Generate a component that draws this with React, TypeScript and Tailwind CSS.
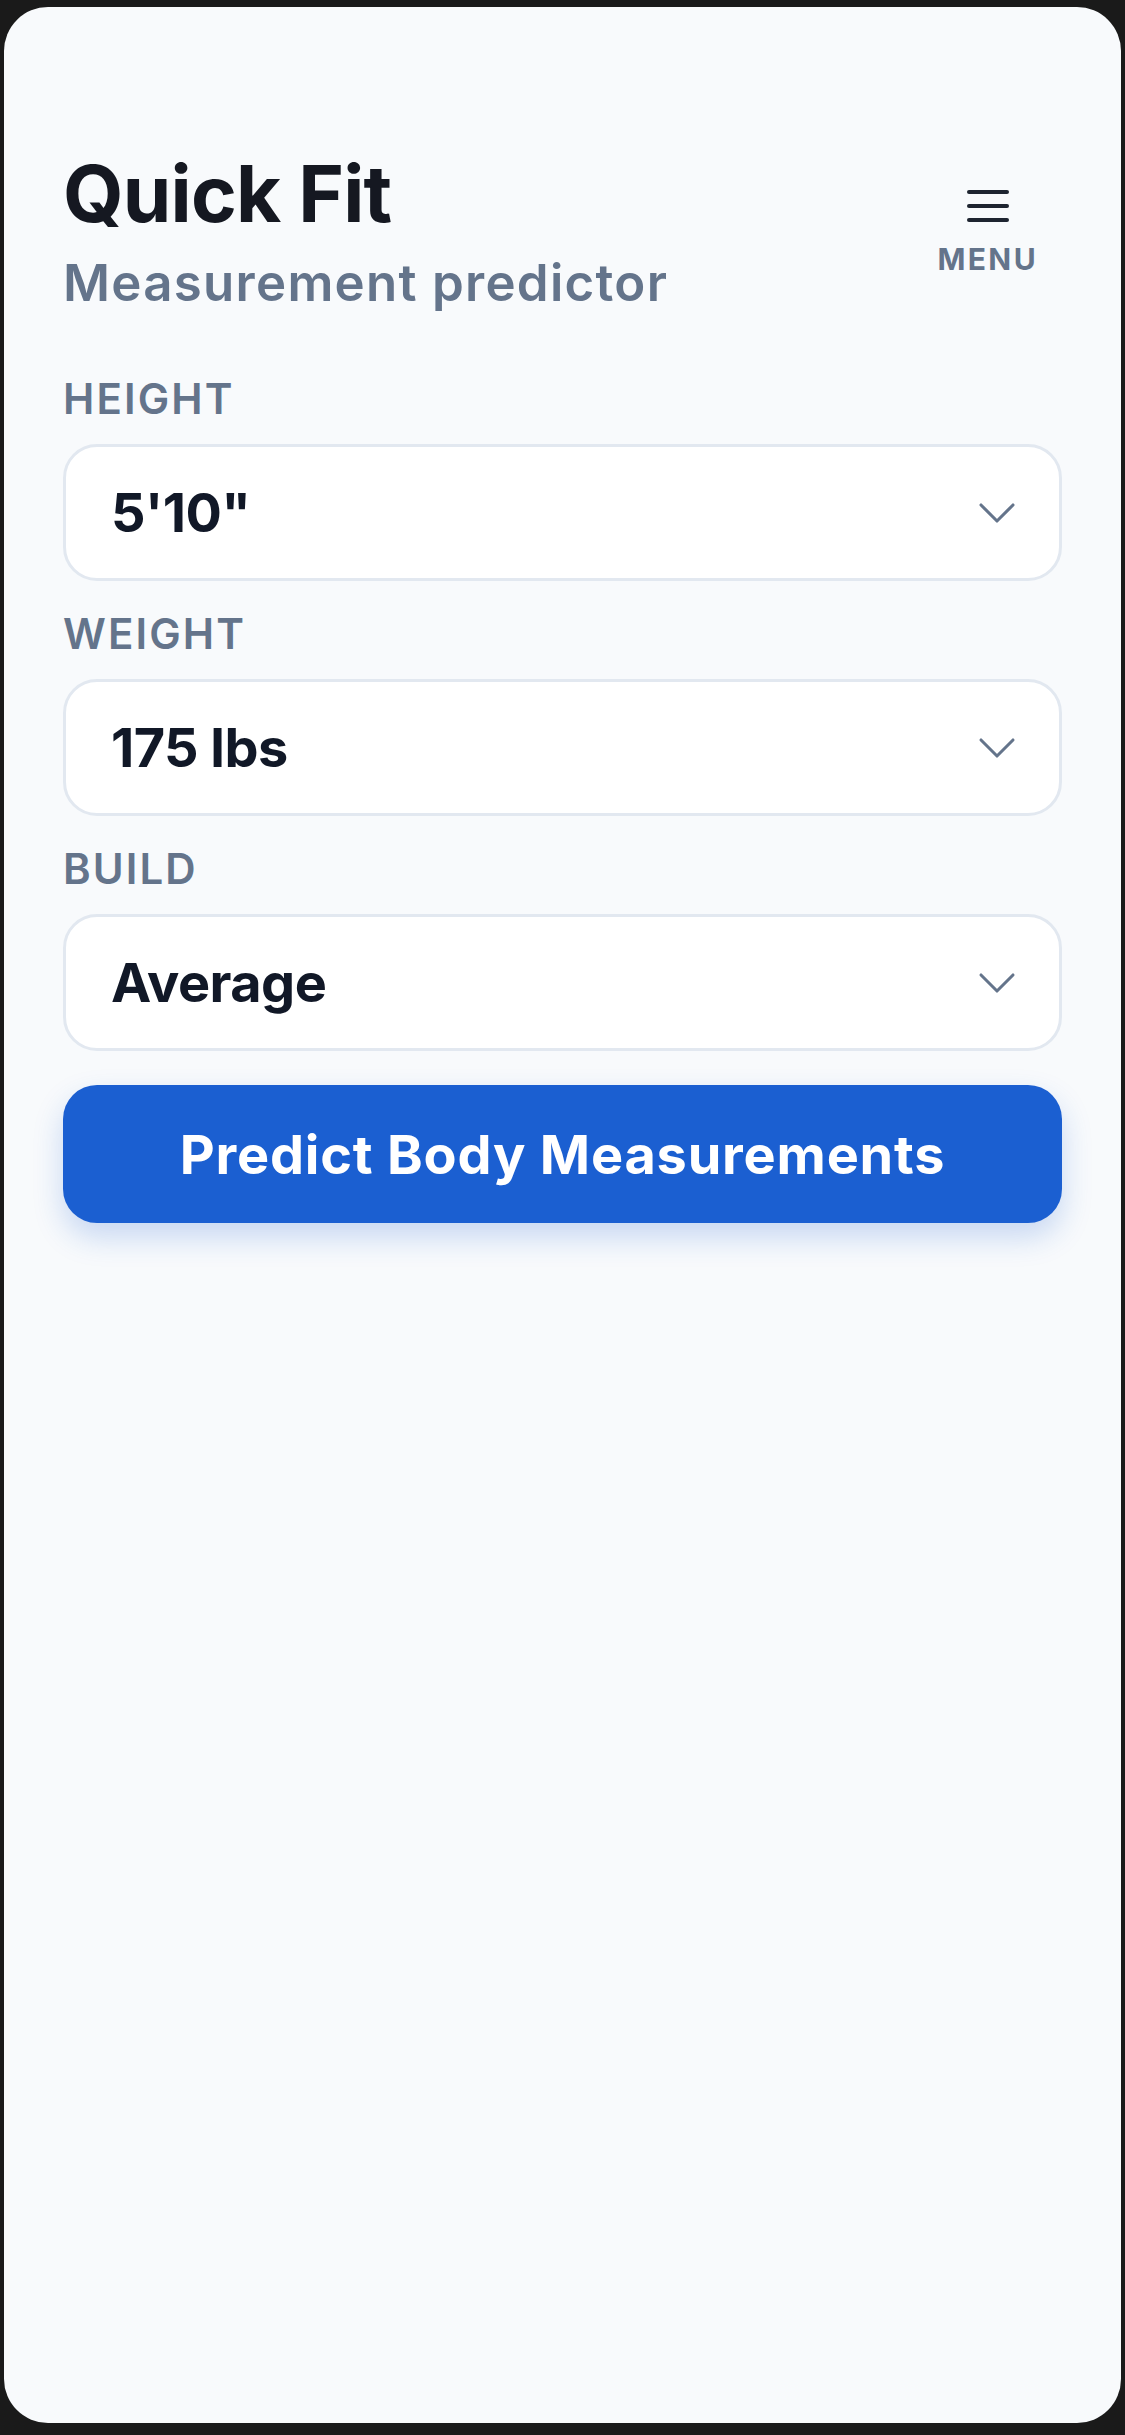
import { ChevronDown } from "lucide-react";

const fields = [
  { label: "HEIGHT", value: `5'10"` },
  { label: "WEIGHT", value: "175 lbs" },
  { label: "BUILD", value: "Average" },
];

function SelectField({ label, value }: { label: string; value: string }) {
  return (
    <div className="flex flex-col">
      <label className="text-[42px] font-semibold tracking-[0.05em] text-[#64748b] leading-none pt-[2px] pb-[24px]">
        {label}
      </label>
      <button className="flex h-[137px] w-full items-center justify-between rounded-[34px] border-[3px] border-[#e2e8f0] bg-white pl-[45px] pr-[30px] text-left">
        <span className="text-[54px] font-bold leading-none text-[#111827] tracking-[-0.01em]">
          {value}
        </span>
        <ChevronDown className="h-[64px] w-[64px] text-[#64748b]" strokeWidth={1.15} />
      </button>
    </div>
  );
}

export default function App() {
  return (
    <div
      className="min-h-screen bg-[#1a1a1a] px-[4px] pt-[7px] pb-[12px]"
      style={{ fontFamily: "Inter, 'Noto Sans', sans-serif" }}
    >
      <div className="flex h-[2416px] flex-col rounded-[44px] bg-[#f8fafc] px-[59px] pt-[148px]">
        <header className="flex items-start justify-between">
          <div className="flex flex-col">
            <h1 className="text-[78px] font-bold leading-none tracking-[-0.01em] text-[#151821]">
              Quick Fit
            </h1>
            <p className="mt-[24px] text-[51px] font-semibold leading-none tracking-[0.025em] text-[#64748b]">
              Measurement predictor
            </p>
          </div>
          <button className="mr-[24px] mt-[35px] flex flex-col items-center gap-[22px]">
            <span className="flex w-[42px] flex-col gap-[10px]">
              <span className="h-[4px] w-full rounded-full bg-[#1e2430]" />
              <span className="h-[4px] w-full rounded-full bg-[#1e2430]" />
              <span className="h-[4px] w-full rounded-full bg-[#1e2430]" />
            </span>
            <span className="text-[30px] font-bold leading-none tracking-[0.08em] text-[#64748b]">
              MENU
            </span>
          </button>
        </header>

        <div className="mt-[68px] flex flex-col gap-[30px]">
          {fields.map((f) => (
            <SelectField key={f.label} label={f.label} value={f.value} />
          ))}
        </div>

        <button className="mt-[34px] flex h-[138px] w-full items-center justify-center rounded-[34px] bg-[#1b5fd1] text-[54px] font-bold tracking-[0.015em] text-white shadow-[0_14px_30px_rgba(27,95,209,0.22)]">
          Predict Body Measurements
        </button>
      </div>
    </div>
  );
}
